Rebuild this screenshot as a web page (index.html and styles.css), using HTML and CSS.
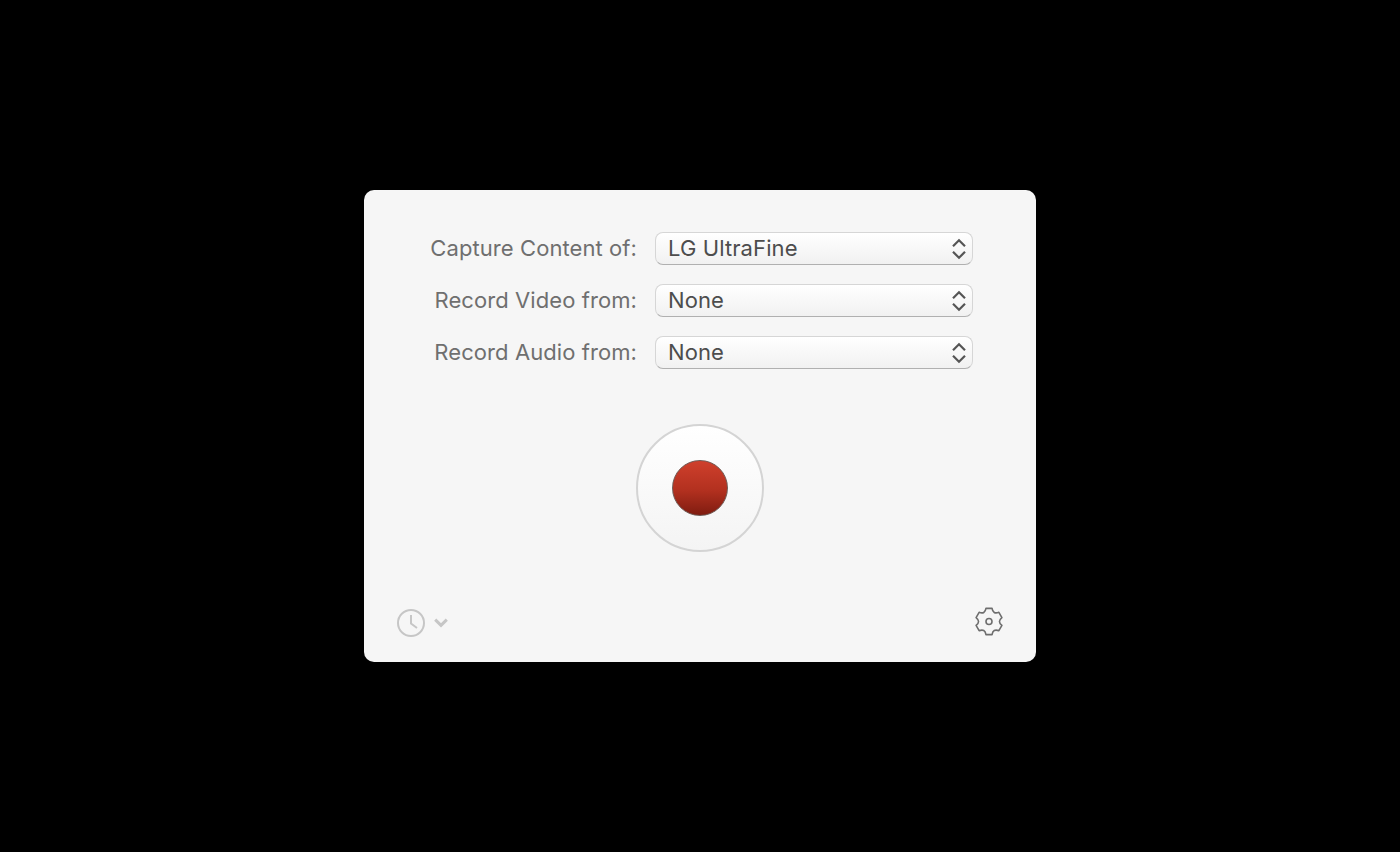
FILE: index.html
```html
<!DOCTYPE html>
<html lang="en">
<head>
<meta charset="utf-8">
<title>Screen Recording</title>
<link rel="stylesheet" href="styles.css">
</head>
<body>
<main class="panel">
  <div class="form">
    <div class="row">
      <span class="label">Capture Content of:</span>
      <div class="select"><span class="value">LG UltraFine</span>
        <svg class="updown" width="14" height="22" viewBox="0 0 14 22"><path d="M1 8.2 7 2.2 13 8.2M1 13.8 7 19.8 13 13.8"/></svg>
      </div>
    </div>
    <div class="row">
      <span class="label">Record Video from:</span>
      <div class="select"><span class="value">None</span>
        <svg class="updown" width="14" height="22" viewBox="0 0 14 22"><path d="M1 8.2 7 2.2 13 8.2M1 13.8 7 19.8 13 13.8"/></svg>
      </div>
    </div>
    <div class="row">
      <span class="label">Record Audio from:</span>
      <div class="select"><span class="value">None</span>
        <svg class="updown" width="14" height="22" viewBox="0 0 14 22"><path d="M1 8.2 7 2.2 13 8.2M1 13.8 7 19.8 13 13.8"/></svg>
      </div>
    </div>
  </div>
  <div class="record-wrap">
    <div class="record"><div class="dot"></div></div>
  </div>
  <div class="footer">
    <div class="history">
      <svg width="28" height="28" viewBox="0 0 28 28" class="clock"><circle cx="14" cy="14" r="13"/><path d="M14 6v8.5l6 4.5"/></svg>
      <svg width="14" height="10" viewBox="0 0 14 10" class="chev"><path d="M1.2 1.6 7 7.4 12.8 1.6"/></svg>
    </div>
    <svg width="30" height="30" viewBox="0 0.5 30 30" class="gear"><path d="M11.96 1.85H18.04Q19 8.07 24.87 5.79L27.91 11.05Q23 15 27.91 18.95L24.87 24.21Q19 21.93 18.04 28.15H11.96Q11 21.93 5.13 24.21L2.09 18.95Q7 15 2.09 11.05L5.13 5.79Q11 8.07 11.96 1.85Z"/><circle cx="15" cy="15" r="3"/></svg>
  </div>
</main>
</body>
</html>
```
FILE: styles.css
```css
* { box-sizing: border-box; }
html, body { height: 100%; }
body {
  margin: 0;
  background: #000;
  display: flex;
  justify-content: center;
  padding-top: 190px;
  font-family: Inter, "Liberation Sans", sans-serif;
}
.panel {
  width: 672px;
  height: 472px;
  background: #f6f6f6;
  border-radius: 10px;
  display: flex;
  flex-direction: column;
  padding: 42px 33px 25px 33px;
}
.form { display: flex; flex-direction: column; gap: 19px; padding-right: 30px; }
.row { display: flex; align-items: center; justify-content: flex-end; gap: 18px; }
.label { font-size: 22px; letter-spacing: 0.08px; color: #6f6f6f; padding-bottom: 2px; }
.select {
  width: 318px;
  height: 33px;
  border-radius: 8px;
  border: 1px solid #d6d6d6;
  border-bottom: 1px solid #b0b0b0;
  background: linear-gradient(#ffffff, #f1f1f1);
  display: flex;
  align-items: center;
  justify-content: space-between;
  padding: 0 6px 0 12px;
  font-size: 22px;
  letter-spacing: 0.1px;
  color: #4d4d4d;
}
.value { padding-bottom: 2px; }
.updown { fill: none; stroke: #555; stroke-width: 2.2; }
.record-wrap { display: flex; justify-content: center; margin-top: 55px; }
.record {
  width: 128px;
  height: 128px;
  border-radius: 50%;
  border: 2px solid #d4d4d4;
  background: linear-gradient(#ffffff, #f4f4f4);
  display: flex;
  align-items: center;
  justify-content: center;
}
.dot {
  width: 56px;
  height: 56px;
  border-radius: 50%;
  border: 1px solid #6e5a55;
  background: linear-gradient(#cf402c, #b2301f 55%, #7f1c10);
}
.footer { margin-top: auto; margin-right: -1px; display: flex; align-items: center; justify-content: space-between; }
.history { display: flex; align-items: center; gap: 9px; padding-top: 1px; }
.clock { fill: none; stroke: #c6c6c6; stroke-width: 2; }
.chev { fill: none; stroke: #c6c6c6; stroke-width: 3; }
.gear { fill: none; stroke: #6e6e6e; stroke-width: 1.6; stroke-linejoin: round; }
```
